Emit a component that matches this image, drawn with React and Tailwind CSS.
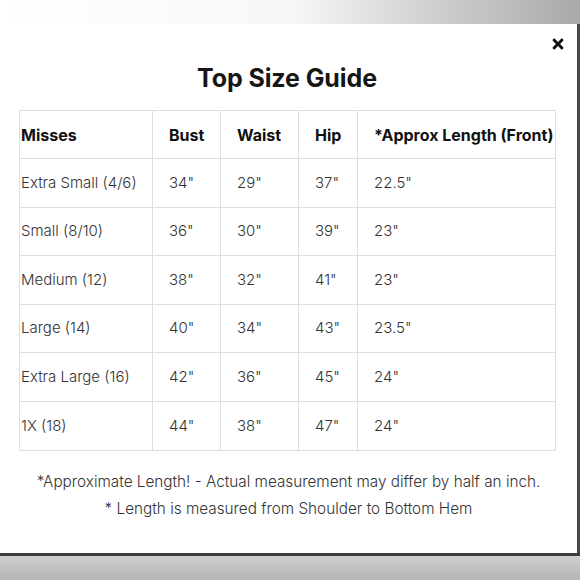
import React from "react";
import { FaTimes } from "react-icons/fa";

const rows = [
  ["Extra Small (4/6)", '34"', '29"', '37"', '22.5"'],
  ["Small (8/10)", '36"', '30"', '39"', '23"'],
  ["Medium (12)", '38"', '32"', '41"', '23"'],
  ["Large (14)", '40"', '34"', '43"', '23.5"'],
  ["Extra Large (16)", '42"', '36"', '45"', '24"'],
  ["1X (18)", '44"', '38"', '47"', '24"'],
];

export default function App() {
  return (
    <div
      className="w-[580px] h-[580px] flex flex-col overflow-hidden bg-white"
      style={{ fontFamily: "Inter, 'Noto Sans', sans-serif" }}
    >
      <div className="h-[24px] shrink-0 bg-gradient-to-r from-white via-[#f7f7f7] to-[#a9a9a9]" />
      <div className="flex flex-1 min-h-0">
        <div className="relative flex-1 bg-white flex flex-col items-center">
          <FaTimes className="absolute right-[11px] top-[12px] text-[#111] w-[16px] h-[16px]" />
          <h1 className="mt-[38px] h-[32px] text-[25px] leading-[32px] font-bold text-[#161616] tracking-[-0.1px] ml-[-3px]">
            Top Size Guide
          </h1>
          <table className="self-start ml-[19px] mt-[16px] border-collapse border border-[#dedede] text-[15px] text-[#333]">
            <colgroup>
              <col className="w-[133px]" />
              <col className="w-[68px]" />
              <col className="w-[78px]" />
              <col className="w-[59px]" />
              <col className="w-[198px]" />
            </colgroup>
            <thead>
              <tr className="h-[48px]">
                {["Misses", "Bust", "Waist", "Hip", "*Approx Length (Front)"].map((h, i) => (
                  <th
                    key={h}
                    className={`border border-[#dedede] text-left font-bold text-[#111] text-[16px] whitespace-nowrap ${i === 0 ? "pl-[1px]" : "pl-[16px]"}`}
                  >
                    {h}
                  </th>
                ))}
              </tr>
            </thead>
            <tbody>
              {rows.map((r) => (
                <tr key={r[0]} className="h-[48.6px]">
                  {r.map((c, i) => (
                    <td
                      key={i}
                      className={`border border-[#dedede] whitespace-nowrap font-light ${i === 0 ? "pl-[1px]" : "pl-[16px]"}`}
                    >
                      {c}
                    </td>
                  ))}
                </tr>
              ))}
            </tbody>
          </table>
          <div className="mt-[17px] text-center text-[15.3px] leading-[27px] text-[#333] font-light">
            <p>*Approximate Length! - Actual measurement may differ by half an inch.</p>
            <p>* Length is measured from Shoulder to Bottom Hem</p>
          </div>
        </div>
        <div className="w-[3px] shrink-0 bg-[#4a4a4a]" />
      </div>
      <div className="h-[3px] shrink-0 bg-[#3c3c3c]" />
      <div className="h-[24px] shrink-0 bg-gradient-to-b from-[#cfcfcf] to-[#b5b5b5]" />
    </div>
  );
}
